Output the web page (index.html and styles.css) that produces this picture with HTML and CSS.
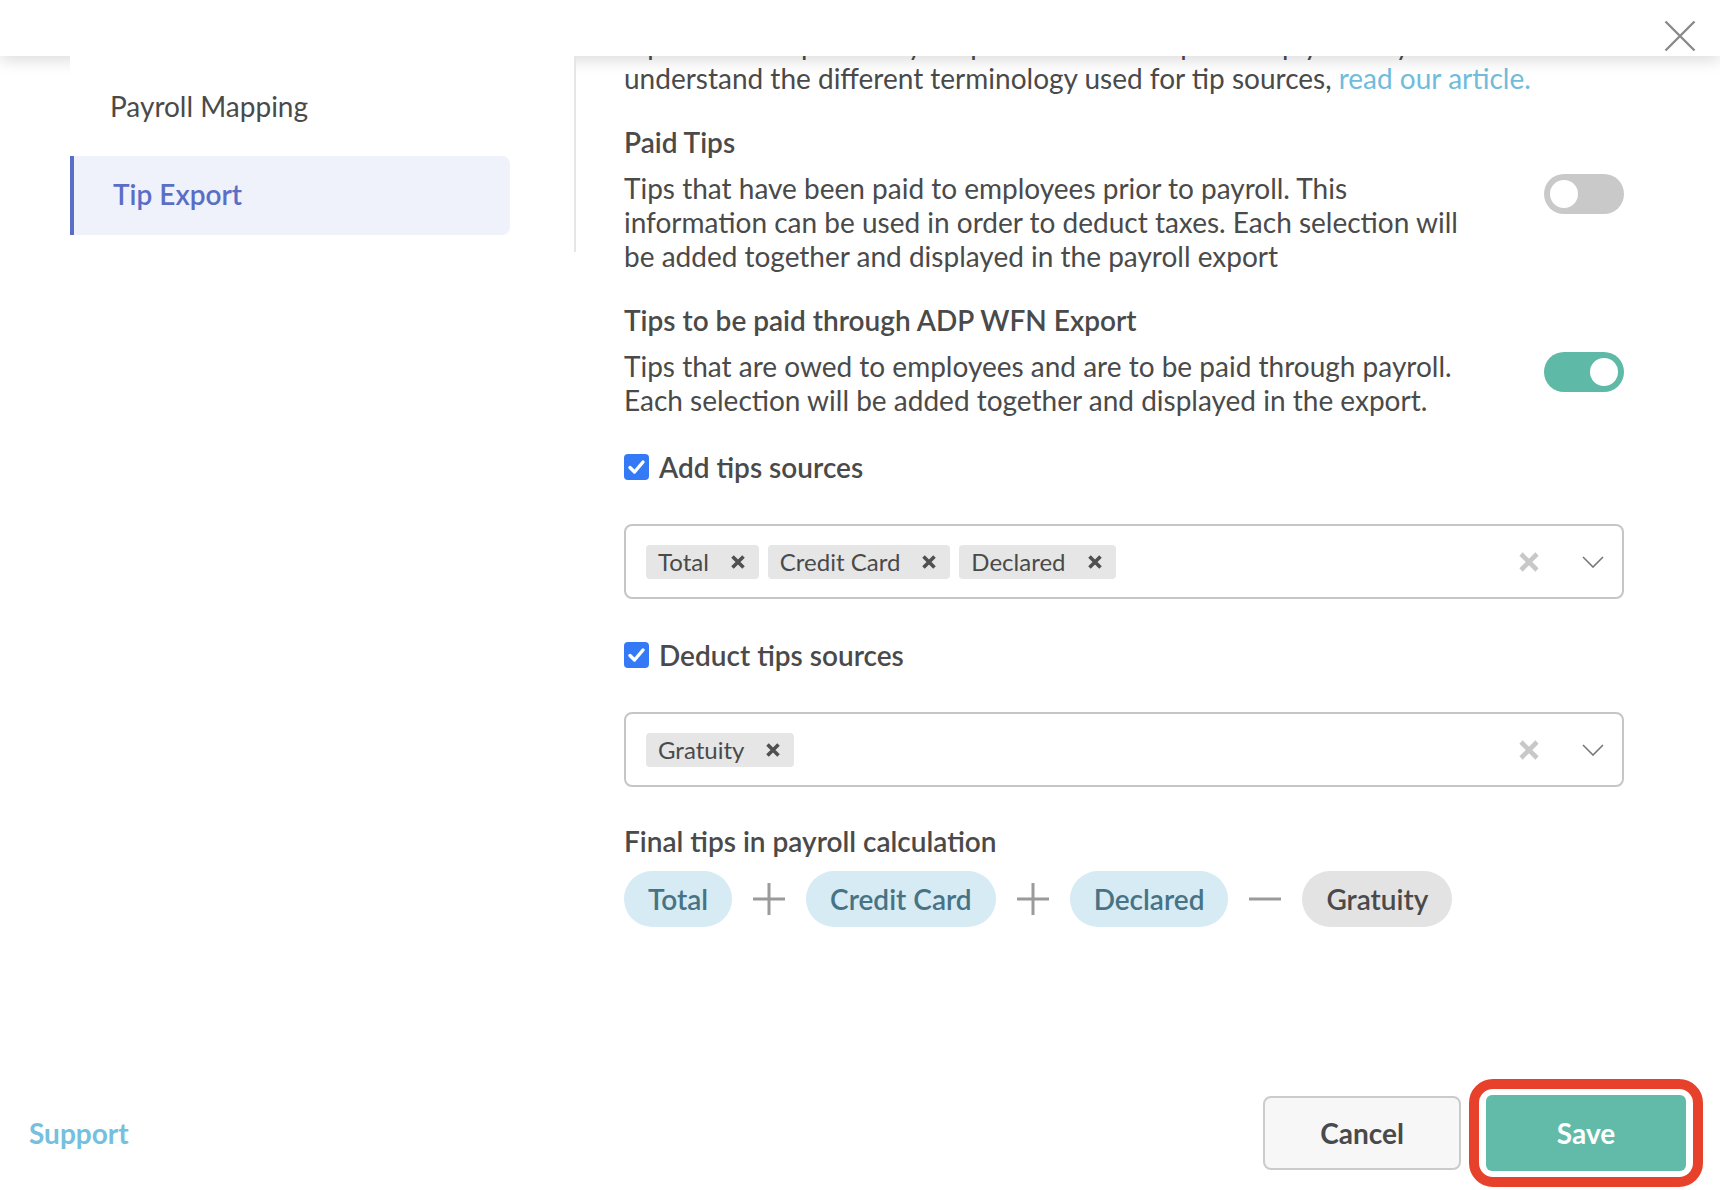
FILE: index.html
```html
<!DOCTYPE html>
<html lang="en">
<head>
<meta charset="utf-8">
<title>Tip Export</title>
<link rel="stylesheet" href="styles.css">
</head>
<body>
<div class="modal">
  <header class="modal-header">
    <button class="close-btn" aria-label="Close">
      <svg viewBox="0 0 32 32" width="32" height="32"><path d="M1.5 1.5 L30.5 30.5 M30.5 1.5 L1.5 30.5" stroke="#8a8a8a" stroke-width="2.4" fill="none"/></svg>
    </button>
  </header>

  <div class="modal-body">
    <div class="gutter"></div>
    <nav class="sidenav">
      <a class="nav-item">Payroll Mapping</a>
      <a class="nav-item is-active">Tip Export</a>
    </nav>

    <main class="content">
      <div class="content-inner">
        <p class="intro">Tip sources depend on your point of sale setup. To help you fully<br>understand the different terminology used for tip sources, <a href="#">read our article.</a></p>

        <section class="setting">
          <h3 class="setting-title">Paid Tips</h3>
          <div class="setting-row">
            <p class="setting-desc">Tips that have been paid to employees prior to payroll. This information can be used in order to deduct taxes. Each selection will be added together and displayed in the payroll export</p>
            <span class="toggle"><span class="toggle-knob"></span></span>
          </div>
        </section>

        <section class="setting">
          <h3 class="setting-title">Tips to be paid through ADP WFN Export</h3>
          <div class="setting-row">
            <p class="setting-desc">Tips that are owed to employees and are to be paid through payroll. Each selection will be added together and displayed in the export.</p>
            <span class="toggle is-on"><span class="toggle-knob"></span></span>
          </div>
        </section>

        <label class="check-row">
          <span class="checkbox"><svg viewBox="0 0 25 26" width="25" height="26"><path d="M6 13.5 L10.5 18 L19 8" stroke="#fff" stroke-width="3.4" fill="none" stroke-linecap="round" stroke-linejoin="round"/></svg></span>
          Add tips sources
        </label>

        <div class="select">
          <div class="chips">
            <span class="chip">Total <svg class="chip-x" viewBox="0 0 14 14" width="14" height="14"><path d="M1.5 1.5 L12.5 12.5 M12.5 1.5 L1.5 12.5" stroke="#505050" stroke-width="3.6" fill="none"/></svg></span>
            <span class="chip">Credit Card <svg class="chip-x" viewBox="0 0 14 14" width="14" height="14"><path d="M1.5 1.5 L12.5 12.5 M12.5 1.5 L1.5 12.5" stroke="#505050" stroke-width="3.6" fill="none"/></svg></span>
            <span class="chip">Declared <svg class="chip-x" viewBox="0 0 14 14" width="14" height="14"><path d="M1.5 1.5 L12.5 12.5 M12.5 1.5 L1.5 12.5" stroke="#505050" stroke-width="3.6" fill="none"/></svg></span>
          </div>
          <svg class="select-clear" viewBox="0 0 20 20" width="20" height="20"><path d="M2 2 L18 18 M18 2 L2 18" stroke="#c8c8c8" stroke-width="4.6" fill="none"/></svg>
          <svg class="select-arrow" viewBox="0 0 22 12" width="22" height="12"><path d="M1 1 L11 11 L21 1" stroke="#777" stroke-width="1.6" fill="none"/></svg>
        </div>

        <label class="check-row">
          <span class="checkbox"><svg viewBox="0 0 25 26" width="25" height="26"><path d="M6 13.5 L10.5 18 L19 8" stroke="#fff" stroke-width="3.4" fill="none" stroke-linecap="round" stroke-linejoin="round"/></svg></span>
          Deduct tips sources
        </label>

        <div class="select">
          <div class="chips">
            <span class="chip">Gratuity <svg class="chip-x" viewBox="0 0 14 14" width="14" height="14"><path d="M1.5 1.5 L12.5 12.5 M12.5 1.5 L1.5 12.5" stroke="#505050" stroke-width="3.6" fill="none"/></svg></span>
          </div>
          <svg class="select-clear" viewBox="0 0 20 20" width="20" height="20"><path d="M2 2 L18 18 M18 2 L2 18" stroke="#c8c8c8" stroke-width="4.6" fill="none"/></svg>
          <svg class="select-arrow" viewBox="0 0 22 12" width="22" height="12"><path d="M1 1 L11 11 L21 1" stroke="#777" stroke-width="1.6" fill="none"/></svg>
        </div>

        <h3 class="calc-title">Final tips in payroll calculation</h3>
        <div class="calc">
          <span class="pill">Total</span>
          <svg class="op" viewBox="0 0 32 32" width="32" height="32"><path d="M16 0 V32 M0 16 H32" stroke="#9a9a9a" stroke-width="3" fill="none"/></svg>
          <span class="pill">Credit Card</span>
          <svg class="op" viewBox="0 0 32 32" width="32" height="32"><path d="M16 0 V32 M0 16 H32" stroke="#9a9a9a" stroke-width="3" fill="none"/></svg>
          <span class="pill">Declared</span>
          <svg class="op" viewBox="0 0 32 32" width="32" height="32"><path d="M0 16 H32" stroke="#9a9a9a" stroke-width="3" fill="none"/></svg>
          <span class="pill is-minus">Gratuity</span>
        </div>
      </div>
    </main>
  </div>

  <footer class="modal-footer">
    <a class="support" href="#">Support</a>
    <div class="actions">
      <button class="btn btn-cancel">Cancel</button>
      <span class="highlight"><button class="btn btn-save">Save</button></span>
    </div>
  </footer>
</div>
</body>
</html>
```

FILE: styles.css
```css
* { box-sizing: border-box; }

html, body {
  margin: 0;
  padding: 0;
}

body {
  width: 1720px;
  height: 1190px;
  overflow: hidden;
  background: #fff;
  color: #4a4a4a;
  font-family: "Lato", "Open Sans", sans-serif;
}

.modal {
  display: flex;
  flex-direction: column;
  height: 1190px;
}

/* header */
.modal-header {
  flex: none;
  height: 56px;
  display: flex;
  justify-content: flex-end;
  align-items: flex-start;
  padding: 20px 24px 0 0;
  background: #fff;
  position: relative;
  z-index: 2;
  box-shadow: 0 5px 14px rgba(0, 0, 0, 0.13);
}

.close-btn {
  border: 0;
  background: none;
  padding: 0;
  width: 32px;
  height: 32px;
  display: block;
}

.close-btn svg { display: block; }

/* body */
.modal-body {
  flex: 1;
  min-height: 0;
  display: flex;
}

.gutter {
  flex: none;
  width: 70px;
}

.sidenav {
  flex: none;
  width: 506px;
  align-self: flex-start;
  display: flex;
  flex-direction: column;
  gap: 11px;
  padding: 10px 0 17px;
  border-right: 2px solid #e6e6e6;
  background: #fff;
  position: relative;
  z-index: 3;
}

.nav-item {
  width: 440px;
  height: 79px;
  display: flex;
  align-items: center;
  padding-left: 36px;
  border-left: 4px solid transparent;
  border-radius: 0 8px 8px 0;
  font-size: 28px;
  color: #4a4a4a;
  text-decoration: none;
}

.nav-item.is-active {
  background: #eff2fb;
  border-left-color: #5b6ec6;
  color: #5b6ec6;
  font-weight: 600;
  padding-left: 39px;
  padding-bottom: 3px;
}

.content {
  flex: 1;
  overflow: hidden;
  padding: 0 96px 0 48px;
}

.content-inner {
  margin-top: -29px;
}

.intro {
  margin: 0;
  font-size: 28px;
  line-height: 34px;
}

.intro a {
  color: #70bcdb;
  text-decoration: none;
}

.setting { margin-top: 30px; }

.setting-title {
  margin: 0 0 12px;
  font-size: 28px;
  line-height: 34px;
  font-weight: 600;
}

.setting-row {
  display: flex;
  align-items: flex-start;
  justify-content: space-between;
}

.setting-desc {
  margin: 0;
  max-width: 850px;
  font-size: 28px;
  line-height: 34px;
}

.toggle {
  flex: none;
  width: 80px;
  height: 40px;
  margin-top: 3px;
  padding: 6px;
  border-radius: 20px;
  background: #c9c9c9;
  display: flex;
}

.toggle.is-on {
  background: #5eb9a6;
  justify-content: flex-end;
}

.toggle-knob {
  width: 28px;
  height: 28px;
  border-radius: 50%;
  background: #fff;
}

/* checkbox rows */
.check-row {
  display: flex;
  align-items: center;
  gap: 10px;
  margin-top: 33px;
  font-size: 28px;
  line-height: 34px;
  font-weight: 600;
}

.select + .check-row { margin-top: 39px; }

.checkbox {
  flex: none;
  width: 25px;
  height: 26px;
  border-radius: 4px;
  background: #3479f6;
  display: flex;
}

/* multi select */
.select {
  margin-top: 40px;
  height: 75px;
  border: 2px solid #c6c6c6;
  border-radius: 8px;
  display: flex;
  align-items: center;
  padding: 0 18px 0 20px;
}

.chips {
  flex: 1;
  display: flex;
  gap: 9px;
}

.chip {
  height: 34px;
  display: flex;
  align-items: center;
  gap: 22px;
  padding: 0 14px 0 12px;
  background: #e6e6e6;
  border-radius: 4px;
  font-size: 24px;
  color: #4a4a4a;
}

.select-clear { margin-right: 43px; flex: none; }
.select-arrow { flex: none; }

/* calculation */
.calc-title {
  margin: 37px 0 13px;
  font-size: 28px;
  line-height: 34px;
  font-weight: 600;
}

.calc {
  display: flex;
  align-items: center;
}

.pill {
  height: 56px;
  display: flex;
  align-items: center;
  padding: 0 24px;
  border-radius: 28px;
  background: #d6ebf4;
  color: #477385;
  font-size: 28px;
  font-weight: 600;
}

.pill.is-minus {
  background: #e3e3e3;
  color: #4a4a4a;
}

.op {
  flex: none;
  margin: 0 21px;
}

/* footer */
.modal-footer {
  flex: none;
  height: 114px;
  display: flex;
  align-items: center;
  justify-content: space-between;
  padding: 0 17px 0 29px;
}

.support {
  font-size: 28px;
  font-weight: 700;
  color: #75c0de;
  text-decoration: none;
}

.actions {
  display: flex;
  align-items: center;
  gap: 8px;
}

.btn {
  font-family: inherit;
  font-size: 28px;
  font-weight: 700;
  border-radius: 8px;
  cursor: pointer;
}

.btn-cancel {
  width: 198px;
  height: 74px;
  background: #f7f7f7;
  border: 2px solid #cbcbcb;
  color: #4a4a4a;
}

.highlight {
  display: flex;
  padding: 6px 7px;
  border: 10px solid #e8412b;
  border-radius: 24px;
}

.btn-save {
  width: 200px;
  height: 76px;
  border: 0;
  border-radius: 6px;
  background: #62bba9;
  color: #fff;
}
```
